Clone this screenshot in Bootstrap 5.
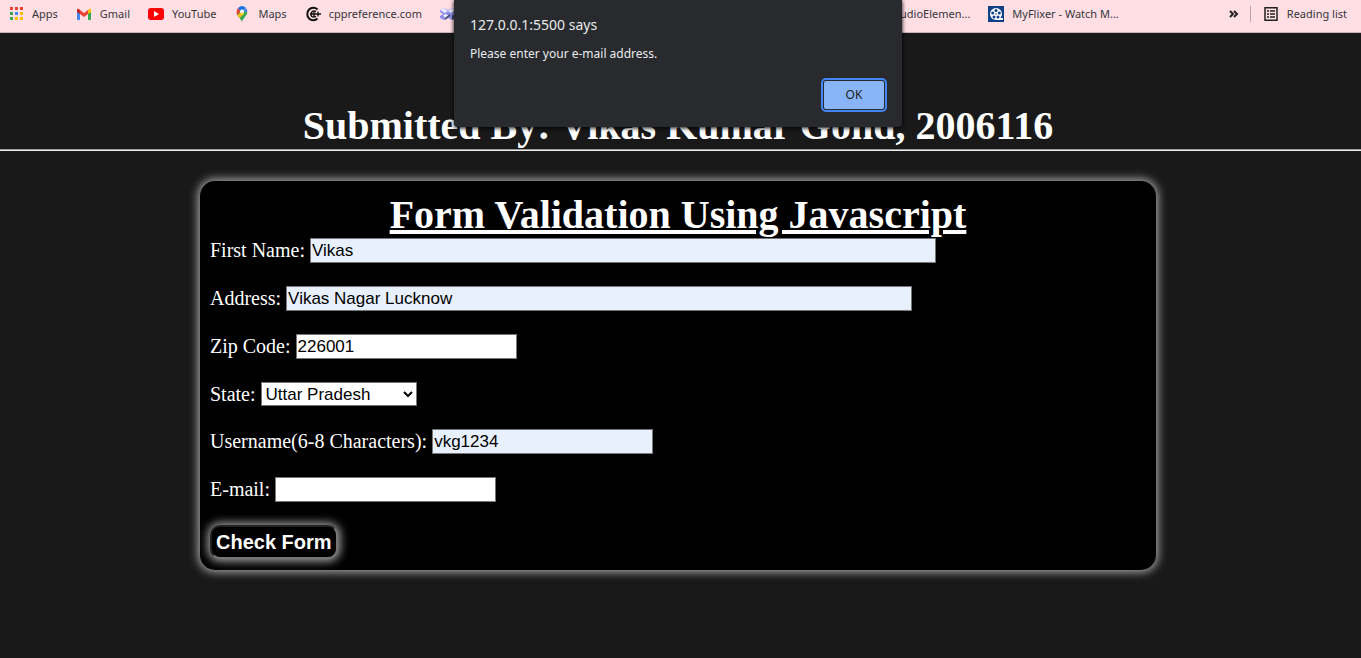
<!DOCTYPE html>
<html lang="en">
<head>
<meta charset="utf-8">
<meta name="viewport" content="width=device-width, initial-scale=1">
<title>Form Validation</title>
<link rel="stylesheet" href="https://cdn.jsdelivr.net/npm/bootstrap@5.3.0/dist/css/bootstrap.min.css">
<style>
  body { background: #191919; color: #fff; font-family: "Liberation Serif", "Times New Roman", serif; font-size: 20px; line-height: 24px; }
  .bookmarks { height: 33px; background: #ffdee4; border-bottom: 1px solid #c9b3b8; padding: 0 14px 4px 8px; gap: 18px; font: 11px/16px "Noto Sans", "Open Sans", sans-serif; white-space: nowrap; }
  .bookmarks a, .bookmarks button { color: #35363a; text-decoration: none; display: flex; align-items: center; gap: 8px; background: none; border: 0; padding: 0; }
  .bookmarks svg { width: 16px; height: 16px; flex: none; }
  .bookmarks-end { margin-left: 89px; }
  .bar-rule { width: 1px; height: 16px; background: #b9a3a8; }
  .dialog-layer { padding-right: 5px; z-index: 10; pointer-events: none; }
  .dialog-box { width: 448px; height: 127px; padding: 16px; background: #292a2d; color: #e8eaed; border-radius: 0 0 4px 4px; box-shadow: 0 1px 4px #000; font-family: "Noto Sans", "Open Sans", sans-serif; pointer-events: auto; }
  .dialog-box h2 { font-size: 14px; line-height: 18px; margin: 0 0 11px; font-weight: 400; }
  .dialog-box p { font-size: 12px; line-height: 18px; margin: 0; }
  .ok-btn { width: 60px; height: 28px; border: 0; border-radius: 2px; background: #8ab4f8; color: #202124; font-size: 12px; line-height: 16px; outline: 2px solid #4285f4; outline-offset: 1px; margin: 0 2px 2px 0; }
  .page-title { font-size: 40px; line-height: 46px; font-weight: 700; margin: 0; padding: 70px 5px 0 0; text-align: center; }
  .title-rule { margin: 0; border: 0; height: 2px; opacity: 1; background: linear-gradient(#9a9a9a 50%, #eee 50%); }
  .form-panel { margin: 30px 205px 40px 200px; padding: 11px 10px; background: #000; border-radius: 15px; box-shadow: 0 0 10px 2px #aaa; }
  .form-panel h2 { font-size: 40px; line-height: 46px; font-weight: 700; margin: 0; text-align: center; text-decoration: underline; }
  .field-row { display: flex; align-items: flex-start; gap: 5px; margin-bottom: 23px; white-space: nowrap; }
  .field-row input, .field-row select { font: 17px/21px "Liberation Sans", Arial, sans-serif; color: #000; background: #fff; border: 1px solid #767676; border-radius: 0; height: 25px; padding: 1px; width: 221px; }
  .field-row .filled { background: #e8f0fe; }
  .field-row .wide { width: 626px; }
  .field-row select { width: 156px; height: 24px; padding: 0; }
  .check-btn { font: 700 20px/24px "Liberation Sans", Arial, sans-serif; color: #fff; background: #000; border: 2px inset #767676; border-radius: 10px; height: 34px; padding: 3px 4px; display: block; box-shadow: 0 0 10px 2px #aaa; }
</style>
</head>
<body class="min-vh-100">
<nav class="bookmarks d-flex align-items-center" aria-label="Bookmarks">
  <a href="#"><svg viewBox="0 0 16 16"><g fill="#ea4335"><path d="M2 1h3v3H2zM7 1h3v3H7zM12 1h3v3h-3z"/></g><path fill="#34a853" d="M2 6h3v3H2zM2 11h3v3H2z"/><path fill="#4285f4" d="M7 6h3v3H7z"/><path fill="#fbbc04" d="M12 6h3v3h-3zM7 11h3v3H7zM12 11h3v3h-3z"/></svg>Apps</a>
  <a href="#"><svg viewBox="0 0 16 16"><path fill="#4285f4" d="M1 4v9q0 1 1 1h2V7z"/><path fill="#34a853" d="M15 4v9q0 1-1 1h-2V7z"/><path fill="#ea4335" d="M4 4l4 3 4-3v4l-4 3-4-3z"/><path fill="#c5221f" d="M1 4q0-2 2-1l1 1v4L1 6z"/><path fill="#fbbc04" d="M15 4q0-2-2-1l-1 1v4l3-2z"/></svg>Gmail</a>
  <a href="#"><svg viewBox="0 0 16 16"><rect y="2" width="16" height="12" rx="3" fill="#f00"/><path fill="#fff" d="M6 5l5 3-5 3z"/></svg>YouTube</a>
  <a href="#"><svg viewBox="0 0 16 16"><path fill="#34a853" d="M8 16c-.8-3-4.500-5.500-5.300-8.500L8 2l5.300 4c0 4-4.500 6-5.300 10z"/><path fill="#fbbc04" d="M3.300 9L10 4v4l-4.500 4z"/><path fill="#ea4335" d="M4 2l3 3-4 4q-1.200-4 1-7z"/><path fill="#1a73e8" d="M4 2q4-4 8 0L7 6z"/><path fill="#4285f4" d="M12 2q1.500 1.500 1.300 4H9z"/><circle cx="8" cy="5.500" r="2" fill="#fff"/></svg>Maps</a>
  <a href="#"><svg viewBox="0 0 16 16" fill="none" stroke="#111" stroke-width="2"><path d="M12.500 3.500A6 6.300 0 1 0 12.500 12.500"/><path d="M11 5.500Q6.500 4 6 8t5 2.500" stroke-width="1.500"/><path d="M5 8h11M9 5.500v5M13 5.500v5" stroke-width="1.300"/></svg>cppreference.com</a>
  <a href="#" aria-label="Bookmark"><svg viewBox="0 0 16 16"><path fill="#8d8fe6" d="M0 4l4-2 4 2 4-2 4 2v3l-3 2 3 1v2l-4 2-4-2-4 2-4-2v-2l3-2-3-2z"/><path fill="#e9e9ff" d="M0 4l4-2 4 3-3 2zM8 5l4-3 4 2-5 3zM3 9l3-1 3 2-4 2z"/><path fill="#45476e" d="M5 12l5-4v2l-5 4zM12 9l4 1v2l-4 2z"/></svg></a>
  <a href="#" class="ms-auto">AudioElemen...</a>
  <a href="#"><svg viewBox="0 0 16 16"><path fill="#0c4087" d="M0 0h16v16H0z"/><circle cx="8" cy="8" r="6" fill="#fff"/><path stroke="#fff" stroke-width="2" d="M9 13h6"/><g fill="#0c4087"><circle cx="8" cy="4.500" r="1.500"/><circle cx="4.700" cy="7" r="1.500"/><circle cx="11.300" cy="7" r="1.500"/><circle cx="6" cy="11" r="1.500"/><circle cx="10" cy="11" r="1.500"/><circle cx="8" cy="8" r=".7"/></g></svg>MyFlixer - Watch M...</a>
  <div class="bookmarks-end d-flex align-items-center gap-2">
    <button type="button" aria-label="More bookmarks"><svg viewBox="0 0 16 16" fill="none" stroke="#222" stroke-width="2"><path d="M4 5l3 3-3 3M8 5l3 3-3 3"/></svg></button>
    <span class="bar-rule"></span>
    <button type="button" class="ms-1"><svg viewBox="0 0 16 16" fill="none" stroke="#222" stroke-width="1.500"><path d="M2 1.750h12v12.500H2zM4 5h2M7 5h5M4 8h2M7 8h5M4 11h2M7 11h5"/></svg>Reading list</button>
  </div>
</nav>
<div class="dialog-layer position-absolute top-0 start-0 end-0 d-flex justify-content-center">
  <section class="dialog-box d-flex flex-column" role="alertdialog" aria-labelledby="says" aria-describedby="msg">
    <h2 id="says">127.0.0.1:5500 says</h2>
    <p id="msg">Please enter your e-mail address.</p>
    <button type="button" class="ok-btn mt-auto align-self-end">OK</button>
  </section>
</div>
<main>
  <h1 class="page-title">Submitted By: Vikas Kumar Gond, 2006116</h1>
  <hr class="title-rule">
  <form class="form-panel">
    <h2>Form Validation Using Javascript</h2>
    <div class="field-row"><label for="fname">First Name:</label><input id="fname" class="filled wide" type="text" value="Vikas"></div>
    <div class="field-row"><label for="addr">Address:</label><input id="addr" class="filled wide" type="text" value="Vikas Nagar Lucknow"></div>
    <div class="field-row"><label for="zip">Zip Code:</label><input id="zip" type="text" value="226001"></div>
    <div class="field-row"><label for="state">State:</label><select id="state"><option>Uttar Pradesh</option></select></div>
    <div class="field-row"><label for="user">Username(6-8 Characters):</label><input id="user" class="filled" type="text" value="vkg1234"></div>
    <div class="field-row"><label for="email">E-mail:</label><input id="email" type="text"></div>
    <button type="button" class="check-btn">Check Form</button>
  </form>
</main>
<script src="https://cdn.jsdelivr.net/npm/bootstrap@5.3.0/dist/js/bootstrap.bundle.min.js"></script>
</body>
</html>
